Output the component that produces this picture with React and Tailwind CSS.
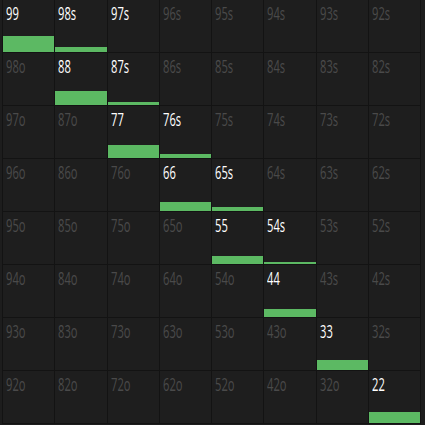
import React from "react";

const RANKS = ["9", "8", "7", "6", "5", "4", "3", "2"];

// hands that are in the range (white label)
const ACTIVE = ["99", "98s", "97s", "88", "87s", "77", "76s", "66", "65s", "55", "54s", "44", "33", "22"];

// bar heights in px
const BARS = {
  "99": 16,
  "98s": 5,
  "88": 14,
  "87s": 3,
  "77": 13,
  "76s": 4,
  "66": 9,
  "65s": 4,
  "55": 8,
  "54s": 2,
  "44": 8,
  "33": 10,
  "22": 11,
};

const handName = (i, j) => {
  if (i === j) return RANKS[i] + RANKS[j];
  if (j > i) return RANKS[i] + RANKS[j] + "s";
  return RANKS[j] + RANKS[i] + "o";
};

const Cell = ({ hand }) => {
  const active = ACTIVE.includes(hand);
  const bar = BARS[hand];
  return (
    <div className="relative h-[52px] bg-[#1e1e1e] overflow-hidden">
      <div className="pl-[3px] pt-[4px] leading-none">
        <span
          className={
            "inline-block origin-top-left scale-x-[0.62] text-[18px] leading-none font-['Open_Sans',sans-serif] " +
            (active ? "text-white" : "text-[#4a4a4a]")
          }
        >
          {hand}
        </span>
      </div>
      {bar ? (
        <div className="absolute left-0 right-0 bottom-0 bg-[#5cb963]" style={{ height: bar }} />
      ) : null}
    </div>
  );
};

export default function App() {
  return (
    <div className="w-[425px] h-[425px] bg-[#1d1d1d] overflow-hidden">
      <div className="ml-[2px] w-[419px] grid grid-cols-8 gap-px bg-[#131313] px-px pb-px">
        {RANKS.map((_, i) =>
          RANKS.map((__, j) => <Cell key={i + "-" + j} hand={handName(i, j)} />)
        )}
      </div>
    </div>
  );
}
